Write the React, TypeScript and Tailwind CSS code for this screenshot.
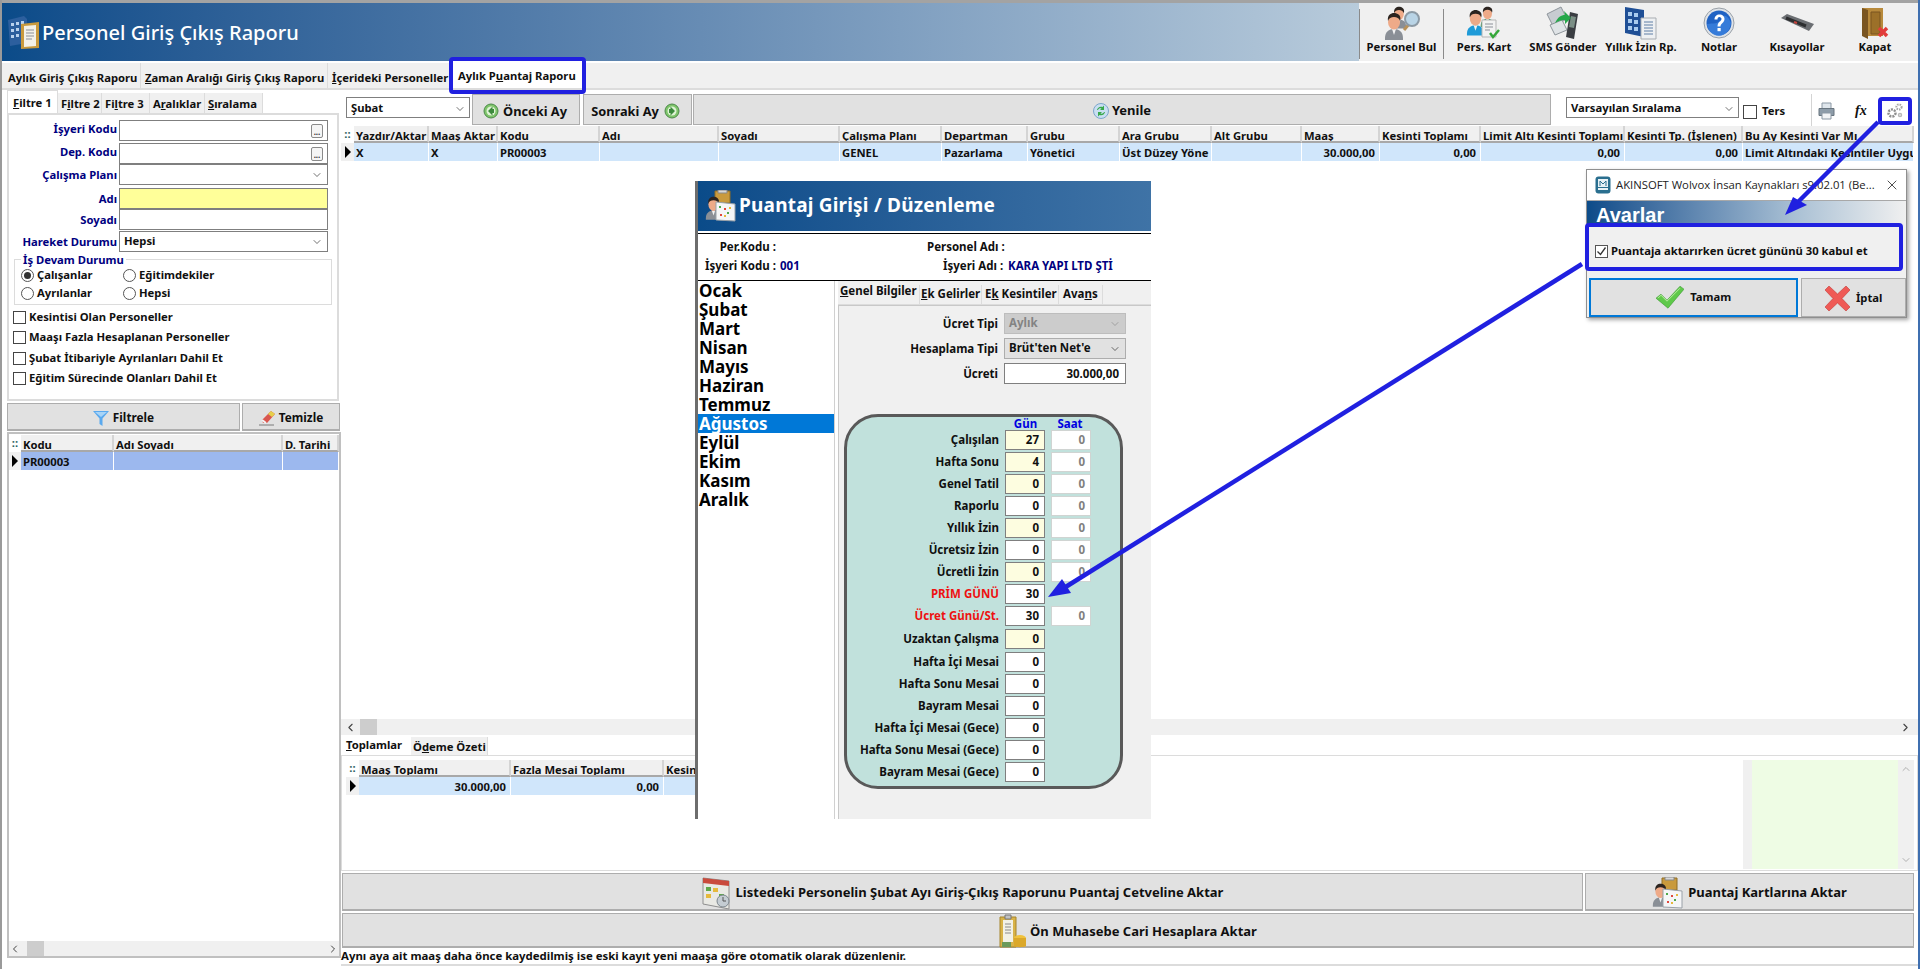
import React from "react";
import { ChevronDown, ChevronLeft, ChevronRight, ChevronUp, X } from "lucide-react";

// --- drawn icons ---
const Person = ({ x = 0, y = 0, s = 1, suit = "#8a8f96" }: { x?: number; y?: number; s?: number; suit?: string }) => (
  <g transform={`translate(${x} ${y}) scale(${s})`}>
    <path d="M1 26c0-6 4-9 9-9s9 3 9 9v2H1z" fill={suit} />
    <path d="M8 17l2 6 2-6z" fill="#f2f2f2" />
    <ellipse cx="10" cy="10" rx="6" ry="7.5" fill="#eeaa88" />
    <path d="M4 9c-1-6 3-8 6-8s8 2 6 8c-1-3-3-4-6-4S5 6 4 9z" fill="#2b2420" />
  </g>
);

const AppIcon = () => (
  <svg width="34" height="33" viewBox="0 0 34 33">
    <path d="M2 4l16-4 3 3v24L4 30z" fill="#2c5f9e" />
    <g fill="#b9d2ee">
      <rect x="5" y="7" width="3" height="3" /><rect x="10" y="6" width="3" height="3" /><rect x="15" y="5" width="3" height="3" />
      <rect x="5" y="13" width="3" height="3" /><rect x="10" y="12" width="3" height="3" /><rect x="15" y="11" width="3" height="3" />
      <rect x="5" y="19" width="3" height="3" /><rect x="10" y="18" width="3" height="3" />
    </g>
    <path d="M15 8l18-2v26l-18 1z" fill="#c99a3d" />
    <path d="M18 10l12-1v21l-12 1z" fill="#f3f1e8" />
    <path d="M20 14h8M20 17h8M20 20h8M20 23h6" stroke="#8b9099" strokeWidth="1" />
  </svg>
);

const PersonelBulIcon = () => (
  <svg width="36" height="34" viewBox="0 0 36 34">
    <Person x={7} y={0} s={0.8} />
    <Person x={0} y={6} s={1} />
    <path d="M20 24l6-7" stroke="#b9925a" strokeWidth="3" />
    <circle cx="28" cy="13" r="7" fill="#b9d4e6" stroke="#8c9aa5" strokeWidth="2" />
  </svg>
);

const PersKartIcon = () => (
  <svg width="36" height="34" viewBox="0 0 36 34">
    <Person x={14} y={0} s={0.75} suit="#2c8a4a" />
    <Person x={0} y={3} s={0.95} suit="#1f9bd8" />
    <path d="M16 14h14v17H16z" fill="#f2f2f2" stroke="#b5b5b5" />
    <path d="M19 18h8M19 21h8M19 24h5" stroke="#8b9099" />
    <path d="M24 27l3 4 6-7" stroke="#35a83a" strokeWidth="2.5" fill="none" />
  </svg>
);

const SmsIcon = () => (
  <svg width="34" height="36" viewBox="0 0 34 36">
    <path d="M1 9l14-7 6 12-14 7z" fill="#c7ccd1" stroke="#8e959b" />
    <path d="M4 20l12-5 5 10-12 5z" fill="#dfe3e6" stroke="#8e959b" />
    <path d="M24 7l8 2-4 25-8-2z" fill="#3a3d42" />
    <path d="M25 11l5 1-2 11-5-1z" fill="#7b8f86" />
    <path d="M9 18c3-6 6-8 10-8l-1-4 7 7-6 6v-4c-4 0-7 1-10 3z" fill="#25a84a" />
  </svg>
);

const YillikIcon = () => (
  <svg width="34" height="36" viewBox="0 0 34 36">
    <path d="M1 2l19 3v27L1 28z" fill="#1f4f96" />
    <g fill="#a9cbef">
      <rect x="4" y="7" width="4" height="4" /><rect x="10" y="8" width="4" height="4" />
      <rect x="4" y="14" width="4" height="4" /><rect x="10" y="15" width="4" height="4" />
      <rect x="4" y="21" width="4" height="4" /><rect x="10" y="22" width="4" height="4" />
    </g>
    <path d="M17 13h15v21H17z" fill="#eef0f2" stroke="#a8adb2" />
    <path d="M20 17h9M20 20h9M20 23h9M20 26h9M20 29h9" stroke="#5f7fa6" />
  </svg>
);

const HelpIcon = () => (
  <svg width="32" height="32" viewBox="0 0 32 32">
    <circle cx="16" cy="16" r="15" fill="#dfe3e8" stroke="#9aa1a8" />
    <circle cx="16" cy="16" r="12.5" fill="#1f62c4" />
    <path d="M4 17c6-1 12 1 16-7 2-4 7 2 8 6-1 8-7 13-12 13-6 0-11-5-12-12z" fill="#3e86e2" opacity=".7" />
    <path d="M11.5 12.5c0-3 2-5 5-5s5 2 5 4.5c0 4-4 4-4 7.500h-3c0-5 4-5 4-7.500 0-1-1-2-2-2-1.500 0-2 1-2 2.500z" fill="#fff" />
    <rect x="14.500" y="21" width="3.200" height="3.200" fill="#fff" />
  </svg>
);

const KeyboardIcon = () => (
  <svg width="34" height="20" viewBox="0 0 34 20">
    <path d="M1 5l6-4 27 10-5 7z" fill="#6b6e72" />
    <path d="M6 5l20 8" stroke="#2d2e30" strokeWidth="3" />
    <path d="M14 9l3 1" stroke="#c8443c" strokeWidth="2" />
  </svg>
);

const DoorIcon = () => (
  <svg width="28" height="34" viewBox="0 0 28 34">
    <path d="M1 2h21v28H1z" fill="#b88a3c" />
    <path d="M1 2l6 2v29l-6-3z" fill="#7a5521" />
    <path d="M10 6h9v22h-9z" fill="#9c7029" stroke="#7a5521" />
    <path d="M18 22l8 8M26 22l-8 8" stroke="#e23c3c" strokeWidth="3.500" />
  </svg>
);

const RoundArrow = ({ dir }: { dir: "left" | "right" }) => (
  <svg width="16" height="16" viewBox="0 0 16 16">
    <circle cx="8" cy="8" r="7" fill="#7ec46a" stroke="#4c8a4a" />
    <circle cx="8" cy="8" r="4.500" fill="#dff3d6" />
    <path d={dir === "left" ? "M9.500 3.500L5 8l4.500 4.500V10H11V6H9.500z" : "M6.500 3.500L11 8l-4.500 4.500V10H5V6h1.500z"} fill="#3c8a3c" />
  </svg>
);

const RefreshIcon = () => (
  <svg width="16" height="16" viewBox="0 0 16 16">
    <circle cx="8" cy="8" r="7.500" fill="#c9dff2" stroke="#7da6cb" />
    <path d="M4 7c.5-2.500 3-4 5.500-3L11 2.500V7H7l1.500-1.500C7 5 5.500 5.500 5 7z" fill="#37a84a" />
    <path d="M12 9c-.5 2.500-3 4-5.500 3L5 13.500V9h4l-1.500 1.500C9 11 10.500 10.500 11 9z" fill="#37a84a" />
  </svg>
);

const PrinterIcon = () => (
  <svg width="17" height="18" viewBox="0 0 17 18">
    <path d="M4 1h9v6H4z" fill="#dfe6ec" stroke="#8b98a4" />
    <path d="M1 6.500h15v7H1z" fill="#8d9ca9" stroke="#68757f" />
    <path d="M4 11h9v6H4z" fill="#f2f4f6" stroke="#8b98a4" />
  </svg>
);

const GearsIcon = () => (
  <svg width="18" height="18" viewBox="0 0 18 18" fill="none">
    <circle cx="6" cy="11" r="3.500" stroke="#8e8e8e" strokeWidth="2.500" strokeDasharray="2 1" />
    <circle cx="13" cy="5" r="2.600" stroke="#a5a5a5" strokeWidth="2" strokeDasharray="1.500 1" />
    <circle cx="14" cy="13" r="1.500" stroke="#b8b8b8" strokeWidth="1.500" />
  </svg>
);

const FunnelIcon = () => (
  <svg width="16" height="16" viewBox="0 0 16 16">
    <path d="M0 1h16L9.500 8.500V16L6.500 14V8.500z" fill="#5aa9ee" />
    <path d="M2 2h12L8 7z" fill="#a8d4f7" />
  </svg>
);

const EraserIcon = () => (
  <svg width="17" height="16" viewBox="0 0 17 16">
    <path d="M3 10L12 1l4 3-8 9H4z" fill="#d9574f" />
    <path d="M9 4l3-3 4 3-3 3z" fill="#e6d04c" />
    <path d="M0 15h15" stroke="#7a7a7a" />
    <path d="M3 10l4 3" stroke="#f2f2f2" strokeWidth="2" />
  </svg>
);

const CalendarIcon = () => (
  <svg width="29" height="35" viewBox="0 0 29 35">
    <path d="M1 3l26 3v28L1 29z" fill="#e9e9e4" stroke="#8f8f8f" />
    <path d="M1 3l26 3v5L1 8z" fill="#c94a3c" />
    <g fill="#5fa84a"><rect x="4" y="12" width="5" height="4" /><rect x="17" y="19" width="5" height="4" /></g>
    <g fill="#e6b93c"><rect x="11" y="13" width="5" height="4" /><rect x="4" y="19" width="5" height="4" /></g>
    <circle cx="21" cy="26" r="6" fill="#c4ccd2" stroke="#7c868e" />
    <path d="M21 22v4h3" stroke="#555" fill="none" />
  </svg>
);

const PuantajIcon = ({ w = 31, h = 32 }: { w?: number; h?: number }) => (
  <svg width={w} height={h} viewBox="0 0 31 32">
    <path d="M10 1h15v12H10z" fill="#c99a3d" stroke="#8f6c25" />
    <path d="M13 0h9v3h-9z" fill="#d8d8d8" stroke="#888" />
    <Person x={0} y={6} s={0.85} />
    <path d="M11 12l19 2v17l-19-1z" fill="#f5f6f7" stroke="#9aa1a8" />
    <g fill="#4ea84a"><rect x="14" y="16" width="2" height="2" /><rect x="22" y="22" width="2" height="2" /></g>
    <g fill="#e0483c"><rect x="19" y="18" width="2" height="2" /><rect x="15" y="24" width="2" height="2" /></g>
    <g fill="#e6b93c"><rect x="24" y="17" width="2" height="2" /><rect x="19" y="25" width="2" height="2" /></g>
  </svg>
);

const LedgerIcon = () => (
  <svg width="28" height="35" viewBox="0 0 28 35">
    <path d="M1 3h16v30H1z" fill="#d9b348" stroke="#a5842c" />
    <path d="M4 6h10v22H4z" fill="#f2f1e6" />
    <path d="M6 10h6M6 13h6M6 16h6M6 19h6" stroke="#8a8a8a" />
    <path d="M6 1h6v4H6z" fill="#c2c2c2" stroke="#777" />
    <path d="M3 28h9v5H3z" fill="#6b9a5a" />
    <ellipse cx="21" cy="24" rx="6" ry="3" fill="#f0c23c" />
    <path d="M15 24v8c0 1.500 12 1.500 12 0v-8" fill="#dba82a" />
  </svg>
);

const CheckIcon = ({ w = 28 }: { w?: number }) => (
  <svg width={w} height={w * 0.8} viewBox="0 0 28 22">
    <path d="M0 12l5-4 6 6L24 0l4 3-16 19z" fill="#5fc94a" stroke="#3e9a34" strokeWidth=".6" />
    <path d="M2 12l3-3 6 6L24 2" stroke="#b8ee9e" strokeWidth="1" fill="none" />
  </svg>
);

const CrossIcon = () => (
  <svg width="25" height="25" viewBox="0 0 25 25">
    <path d="M0 4l4-4 8.500 8L21 0l4 4-8 8.500 8 8.500-4 4-8.500-8L4 25l-4-4 8-8.500z" fill="#ef5a56" stroke="#c33a38" strokeWidth=".6" />
  </svg>
);

const WolvoxIcon = () => (
  <svg width="16" height="18" viewBox="0 0 16 18" className="shrink-0">
    <rect x=".5" y=".5" width="15" height="17" rx="3" fill="#2a6f8f" />
    <rect x="3" y="3" width="10" height="8" fill="#e8f2f6" />
    <path d="M5 10V5l3 3 3-3v5" stroke="#2a6f8f" fill="none" />
    <path d="M3 13h10" stroke="#e8f2f6" strokeWidth="2" />
  </svg>
);

// --- small controls ---
const Tab = ({ active, className = "", children }: { active?: boolean; className?: string; children: React.ReactNode }) => (
  <div className={`flex shrink-0 items-center border-r border-[#dcdcdc] pt-[3px] pl-[3px] whitespace-nowrap ${active ? "-mt-[3px] h-[23px] border-t border-l bg-white" : "h-[20px] bg-[#f0f0f0]"} ${className}`}>
    {children}
  </div>
);

const HeaderCell = ({ w, children }: { w: number; children?: React.ReactNode }) => (
  <div style={{ width: w }} className="h-full shrink-0 overflow-hidden border-r-2 border-b-2 border-r-[#d4d4d4] border-b-[#a8a8a8] bg-[#f0f0f0] pl-[2px] leading-[19px] whitespace-nowrap">
    {children}
  </div>
);

const Cell = ({ w, right, bg, children }: { w: number; right?: boolean; bg: string; children?: React.ReactNode }) => (
  <div style={{ width: w, backgroundColor: bg }} className={`h-full shrink-0 overflow-hidden border-r border-r-white pl-[2px] leading-[20px] whitespace-nowrap ${right ? "pr-[4px] text-right" : "pr-[2px]"}`}>
    {children}
  </div>
);

const Indicator = () => <div className="h-0 w-0 border-y-[6px] border-l-[6px] border-y-transparent border-l-black" />;

const Grip = () => <div className="flex h-full w-full items-center justify-center pb-[2px] leading-none text-[#2c5f5f]">::</div>;

const Field = ({ label, top, bg = "bg-white", lift = "pt-[1px]", children }: { label: string; top: number; bg?: string; lift?: string; children?: React.ReactNode }) => (
  <div style={{ marginTop: top }} className="flex h-[21px] items-center">
    <div className={`w-[110px] pr-[2px] text-right whitespace-nowrap text-[#000080] ${lift}`}>{label}</div>
    <div className={`flex h-full w-[209px] items-center justify-between border border-[#7f7f7f] px-[4px] ${bg}`}>{children}</div>
  </div>
);

const DotsBtn = () => (
  <div className="flex h-[14px] w-[12px] items-end justify-center rounded-[2px] border border-[#8a8a8a] bg-[#f5f5f5] text-[8px] leading-[10px] text-[#333]">...</div>
);

const Radio = ({ on, label, w }: { on?: boolean; label: string; w: string }) => (
  <div className={`flex items-center gap-[3px] ${w}`}>
    <div className="flex h-[13px] w-[13px] items-center justify-center rounded-full border border-[#555] bg-white">
      {on && <div className="h-[7px] w-[7px] rounded-full bg-[#333]" />}
    </div>
    {label}
  </div>
);

const Box = ({ label, top = 7 }: { label: string; top?: number }) => (
  <div style={{ marginTop: top }} className="flex h-[13px] items-center gap-[3px]">
    <div className="h-[13px] w-[13px] shrink-0 border border-[#444] bg-white" />
    {label}
  </div>
);

const ToolItem = ({ label, w, icon }: { label: string; w: number; icon: React.ReactNode }) => (
  <div style={{ width: w }} className="flex shrink-0 flex-col items-center">
    <div className="flex h-[34px] items-center justify-center">{icon}</div>
    <div className="leading-[14px] whitespace-nowrap">{label}</div>
  </div>
);

const BigButton = ({ className = "", children }: { className?: string; children: React.ReactNode }) => (
  <div className={`flex items-center justify-center border border-[#adadad] bg-[#e1e1e1] pt-[2px] ${className}`}>{children}</div>
);

// --- data ---
const mainCols: [string, number, string, boolean?][] = [
  ["Yazdır/Aktar", 75, "X"],
  ["Maaş Aktar", 69, "X"],
  ["Kodu", 102, "PR00003"],
  ["Adı", 119, ""],
  ["Soyadı", 121, ""],
  ["Çalışma Planı", 102, "GENEL"],
  ["Departman", 86, "Pazarlama"],
  ["Grubu", 92, "Yönetici"],
  ["Ara Grubu", 92, "Üst Düzey Yöne"],
  ["Alt Grubu", 90, ""],
  ["Maaş", 78, "30.000,00", true],
  ["Kesinti Toplamı", 101, "0,00", true],
  ["Limit Altı Kesinti Toplamı", 144, "0,00", true],
  ["Kesinti Tp. (İşlenen)", 118, "0,00", true],
  ["Bu Ay Kesinti Var Mı", 171, "Limit Altındaki Kesintiler Uygu"],
];

const months = ["Ocak", "Şubat", "Mart", "Nisan", "Mayıs", "Haziran", "Temmuz", "Ağustos", "Eylül", "Ekim", "Kasım", "Aralık"];

const dayRows: { label: string; v: string; saat?: string; yellow?: boolean; red?: boolean; mt?: string }[] = [
  { label: "Çalışılan", v: "27", saat: "0", yellow: true },
  { label: "Hafta Sonu", v: "4", saat: "0", yellow: true },
  { label: "Genel Tatil", v: "0", saat: "0", yellow: true },
  { label: "Raporlu", v: "0", saat: "0" },
  { label: "Yıllık İzin", v: "0", saat: "0", yellow: true },
  { label: "Ücretsiz İzin", v: "0", saat: "0" },
  { label: "Ücretli İzin", v: "0", saat: "0", yellow: true },
  { label: "PRİM GÜNÜ", v: "30", red: true },
  { label: "Ücret Günü/St.", v: "30", saat: "0", red: true },
  { label: "Uzaktan Çalışma", v: "0", yellow: true, mt: "mt-[1px]" },
  { label: "Hafta İçi Mesai", v: "0", mt: "mt-[1px]" },
  { label: "Hafta Sonu Mesai", v: "0" },
  { label: "Bayram Mesai", v: "0" },
  { label: "Hafta İçi Mesai (Gece)", v: "0" },
  { label: "Hafta Sonu Mesai (Gece)", v: "0" },
  { label: "Bayram Mesai (Gece)", v: "0" },
];

export default function App() {
  return (
    <div className="relative flex h-[969px] w-[1920px] flex-col overflow-hidden border-r-2 border-l-2 border-r-[#3f6fb0] border-l-[#9a9a9a] bg-white font-['Noto_Sans','DejaVu_Sans',sans-serif] text-[11.25px] leading-tight font-bold text-[#101010]">
      <div className="h-[3px] shrink-0 bg-[#a3a3a3]" />

      {/* title band and toolbar */}
      <div className="flex h-[58px] shrink-0">
        <div className="flex w-[1357px] items-center gap-[2px] bg-linear-to-r from-[#0a4b89] to-[#b8cbdb] pl-[4px]">
          <AppIcon />
          <span className="text-[20px] font-medium text-white">Personel Giriş Çıkış Raporu</span>
        </div>
        <div className="flex flex-1 items-start bg-[#f0f0f0] pt-[3px]">
          <div className="mt-[3px] h-[50px] border-l border-[#8a8a8a]" />
          <ToolItem label="Personel Bul" w={83} icon={<PersonelBulIcon />} />
          <div className="mt-[3px] h-[50px] border-l border-[#8a8a8a]" />
          <ToolItem label="Pers. Kart" w={80} icon={<PersKartIcon />} />
          <ToolItem label="SMS Gönder" w={78} icon={<SmsIcon />} />
          <ToolItem label="Yıllık İzin Rp." w={78} icon={<YillikIcon />} />
          <ToolItem label="Notlar" w={78} icon={<HelpIcon />} />
          <ToolItem label="Kısayollar" w={78} icon={<KeyboardIcon />} />
          <ToolItem label="Kapat" w={78} icon={<DoorIcon />} />
        </div>
      </div>
      <div className="h-[2px] shrink-0 bg-white" />

      {/* report tabs */}
      <div className="flex h-[27px] shrink-0 items-center border-b-2 border-[#dcdcdc] bg-[#f0f0f0] pl-[1px]">
        <div className="flex h-full w-[138px] items-center border-r border-[#dcdcdc] pt-[5px] pl-[5px] whitespace-nowrap">Aylık Giriş Çıkış Raporu</div>
        <div className="flex h-full w-[187px] items-center border-r border-[#dcdcdc] pt-[5px] pl-[4px] whitespace-nowrap"><span><u>Z</u>aman Aralığı Giriş Çıkış Raporu</span></div>
        <div className="flex h-full w-[122px] items-center overflow-hidden pt-[5px] pl-[4px] whitespace-nowrap"><span><u>İ</u>çerideki Personeller</span></div>
        <div className="-mt-[4px] flex h-[28px] w-[136px] items-center bg-white pt-[6px] pl-[8px] whitespace-nowrap"><span>Aylık P<u>u</u>antaj Raporu</span></div>
      </div>

      <div className="flex min-h-0 flex-1">
        {/* left column */}
        <div className="flex w-[339px] shrink-0 flex-col pt-[3px] pl-[5px]">
          <div className="flex h-[20px] items-end">
            <Tab active className="w-[51px]"><span className="pl-[2px]"><u>F</u>iltre 1</span></Tab>
            <Tab className="w-[44px]"><span>F<u>i</u>ltre 2</span></Tab>
            <Tab className="w-[48px]"><span>Fi<u>l</u>tre 3</span></Tab>
            <Tab className="w-[55px]"><span>A<u>r</u>alıklar</span></Tab>
            <Tab className="w-[58px]"><span><u>S</u>ıralama</span></Tab>
          </div>
          <div className="h-[288px] w-[332px] border-2 border-[#dcdcdc]">
            <Field label="İşyeri Kodu" top={5} lift="pb-[2px]"><span /><DotsBtn /></Field>
            <Field label="Dep. Kodu" top={2} lift="pb-[3px]"><span /><DotsBtn /></Field>
            <Field label="Çalışma Planı" top={0}><span /><ChevronDown size={12} strokeWidth={1.2} /></Field>
            <Field label="Adı" top={3} bg="bg-[#ffff99]" />
            <Field label="Soyadı" top={0} />
            <Field label="Hareket Durumu" top={1}><span>Hepsi</span><ChevronDown size={12} strokeWidth={1.2} /></Field>
            <fieldset className="mt-[1px] ml-[5px] h-[52px] w-[318px] border border-[#dcdcdc] px-[6px]">
              <legend className="px-[2px] leading-[13px] text-[#000080]">İş Devam Durumu</legend>
              <div className="flex h-[18px] items-center"><Radio on label="Çalışanlar" w="w-[102px]" /><Radio label="Eğitimdekiler" w="" /></div>
              <div className="flex h-[18px] items-center"><Radio label="Ayrılanlar" w="w-[102px]" /><Radio label="Hepsi" w="" /></div>
            </fieldset>
            <div className="pl-[4px]">
              <Box label="Kesintisi Olan Personeller" top={6} />
              <Box label="Maaşı Fazla Hesaplanan Personeller" />
              <Box label="Şubat İtibariyle Ayrılanları Dahil Et" top={8} />
              <Box label="Eğitim Sürecinde Olanları Dahil Et" />
            </div>
          </div>
          <div className="mt-[2px] flex h-[28px] gap-[2px] text-[11.8px]">
            <BigButton className="w-[233px] gap-[4px] border-b-2"><FunnelIcon />Filtrele</BigButton>
            <BigButton className="w-[98px] gap-[3px] border-b-2"><EraserIcon />Temizle</BigButton>
          </div>
          <div className="mt-[1px] flex h-[526px] w-[334px] flex-col border-2 border-[#c0c0c0]">
            <div className="mt-[1px] flex h-[17px] w-full">
              <div className="w-[12px] shrink-0"><Grip /></div>
              <HeaderCell w={93}>Kodu</HeaderCell>
              <HeaderCell w={169}>Adı Soyadı</HeaderCell>
              <HeaderCell w={56}>D. Tarihi</HeaderCell>
            </div>
            <div className="flex h-[18px] w-full">
              <div className="flex w-[12px] shrink-0 items-center justify-center bg-[#f0f0f0]"><Indicator /></div>
              <Cell w={93} bg="#9cb8ee">PR00003</Cell>
              <Cell w={169} bg="#9cb8ee" />
              <Cell w={56} bg="#9cb8ee" />
            </div>
            <div className="mt-auto flex h-[15px] w-full items-center bg-[#f0f0f0] text-[#444]">
              <ChevronLeft size={12} strokeWidth={2} />
              <div className="ml-[6px] h-full w-[17px] bg-[#cdcdcd]" />
              <ChevronRight size={12} strokeWidth={2} className="ml-auto" />
            </div>
          </div>
        </div>

        {/* right column */}
        <div className="flex min-w-0 flex-1 flex-col">
          <div className="flex h-[36px] shrink-0 items-end pb-[1px] pl-[5px]">
            <div className="mb-[7px] flex h-[21px] w-[124px] items-center justify-between border border-[#7f7f7f] pt-[2px] pr-[3px] pl-[4px]">Şubat<ChevronDown size={12} strokeWidth={1.2} /></div>
            <BigButton className="ml-[2px] h-[31px] w-[108px] gap-[4px] pr-[2px] text-[12.8px]"><RoundArrow dir="left" />Önceki Ay</BigButton>
            <BigButton className="ml-[3px] h-[31px] w-[109px] gap-[5px] pr-[4px] text-[12.8px]">Sonraki Ay<RoundArrow dir="right" /></BigButton>
            <BigButton className="ml-[1px] h-[31px] w-[858px] gap-[3px] text-[13px]"><RefreshIcon />Yenile</BigButton>
            <div className="mb-[7px] ml-[15px] flex h-[21px] w-[173px] items-center justify-between border border-[#7f7f7f] pt-[2px] pr-[3px] pl-[4px]">Varsayılan Sıralama<ChevronDown size={12} strokeWidth={1.2} /></div>
            <div className="mb-[7px] ml-[4px] flex h-[13px] items-center gap-[5px]"><div className="h-[14px] w-[14px] border border-[#444]" />Ters</div>
            <div className="mb-[-1px] ml-[26px] flex h-[32px] items-center border-l border-[#d4d4d4] pt-[2px]">
              <div className="ml-[6px]"><PrinterIcon /></div>
              <span className="ml-[20px] font-['Liberation_Serif',serif] text-[14px] italic">fx</span>
              <div className="ml-[19px]"><GearsIcon /></div>
            </div>
          </div>

          <div className="flex h-[17px] shrink-0">
            <div className="w-[13px] shrink-0"><Grip /></div>
            {mainCols.map(([h, w]) => <HeaderCell key={h} w={w}>{h}</HeaderCell>)}
          </div>
          <div className="flex h-[18px] shrink-0">
            <div className="flex w-[13px] shrink-0 items-center justify-center bg-[#f0f0f0]"><Indicator /></div>
            {mainCols.map(([h, w, v, r]) => <Cell key={h} w={w} right={r} bg="#d0e6fb">{v}</Cell>)}
          </div>

          <div className="mt-[558px] flex h-[16px] shrink-0 items-center bg-[#f0f0f0] pr-[6px] pl-[3px] text-[#444]">
            <ChevronLeft size={13} strokeWidth={2} />
            <div className="ml-[3px] h-full w-[17px] bg-[#cdcdcd]" />
            <ChevronRight size={13} strokeWidth={2} className="ml-auto" />
          </div>

          <div className="flex h-[20px] shrink-0 items-end whitespace-nowrap">
            <div className="flex h-[20px] w-[70px] items-center pl-[5px]"><span><u>T</u>oplamlar</span></div>
            <div className="flex h-[18px] w-[77px] items-center border-r border-[#dcdcdc] bg-[#f0f0f0] pt-[2px] pl-[2px]"><span>Ö<u>d</u>eme Özeti</span></div>
          </div>
          <div className="flex h-[116px] shrink-0 border border-[#dcdcdc] pt-[4px]">
            <div className="flex min-w-0 flex-1 flex-col pl-[4px]">
              <div className="flex h-[17px]">
                <div className="w-[13px] shrink-0"><Grip /></div>
                <HeaderCell w={152}>Maaş Toplamı</HeaderCell>
                <HeaderCell w={153}>Fazla Mesai Toplamı</HeaderCell>
                <HeaderCell w={120}>Kesinti</HeaderCell>
              </div>
              <div className="flex h-[18px]">
                <div className="flex w-[13px] shrink-0 items-center justify-center bg-[#f0f0f0]"><Indicator /></div>
                <Cell w={152} right bg="#d0e6fb">30.000,00</Cell>
                <Cell w={153} right bg="#d0e6fb">0,00</Cell>
                <Cell w={120} bg="#d0e6fb" />
              </div>
            </div>
            <div className="mb-[1px] w-[9px] bg-[#f0f0f0]" />
            <div className="mb-[1px] w-[146px] bg-[#eefce4]" />
            <div className="mr-[3px] mb-[1px] flex w-[16px] flex-col items-center justify-between bg-[#f0f0f0] py-[3px] text-[#b0b0b0]">
              <ChevronUp size={12} /><ChevronDown size={12} />
            </div>
          </div>

          <div className="mt-[2px] flex h-[38px] shrink-0 gap-[2px] pl-[1px] text-[13px]">
            <BigButton className="w-[1241px] gap-[5px] border-b-2"><CalendarIcon />Listedeki Personelin Şubat Ayı Giriş-Çıkış Raporunu Puantaj Cetveline Aktar</BigButton>
            <BigButton className="w-[329px] gap-[5px] border-b-2"><PuantajIcon />Puantaj Kartlarına Aktar</BigButton>
          </div>
          <BigButton className="mt-[2px] ml-[1px] h-[35px] w-[1572px] shrink-0 gap-[3px] border-b-2 text-[13px]"><LedgerIcon />Ön Muhasebe Cari Hesaplara Aktar</BigButton>
          <div className="flex h-[18px] shrink-0 items-center border-b-2 border-[#dcdcdc] text-[11.4px]">Aynı aya ait maaş daha önce kaydedilmiş ise eski kayıt yeni maaşa göre otomatik olarak düzenlenir.</div>
        </div>
      </div>

      {/* pasted Puantaj window */}
      <div className="absolute top-[181px] left-[693px] flex h-[638px] w-[456px] flex-col border-l-[3px] border-[#6d6d6d] bg-white text-[11.5px]">
        <div className="flex h-[50px] shrink-0 items-center gap-[3px] bg-linear-to-r from-[#0a4b89] to-[#3f73a6] pl-[7px]">
          <PuantajIcon />
          <span className="text-[19px] font-bold tracking-[0.2px] text-white">Puantaj Girişi / Düzenleme</span>
        </div>
        <div className="mt-[2px] flex h-[48px] shrink-0 flex-col justify-center gap-[5px] border-y border-black pb-[1px]">
          <div className="flex">
            <div className="w-[78px] text-right whitespace-nowrap">Per.Kodu :</div>
            <div className="w-[151px]" />
            <div className="w-[73px] text-right whitespace-nowrap">Personel Adı :</div>
          </div>
          <div className="flex">
            <div className="w-[78px] text-right whitespace-nowrap">İşyeri Kodu :</div>
            <div className="ml-[4px] w-[163px] text-[#000080]">001</div>
            <div className="w-[60px] text-right whitespace-nowrap">İşyeri Adı :</div>
            <div className="ml-[5px] whitespace-nowrap text-[#000080]">KARA YAPI LTD ŞTİ</div>
          </div>
        </div>
        <div className="flex min-h-0 flex-1">
          <div className="w-[137px] shrink-0 border-r border-[#d0d0d0] text-[17px] leading-[19px] font-bold text-black">
            {months.map((m) => (
              <div key={m} className={`h-[19px] pl-[1px] ${m === "Ağustos" ? "bg-[#0078d7] text-white" : ""}`}>{m}</div>
            ))}
          </div>
          <div className="ml-[3px] flex min-w-0 flex-1 flex-col bg-[#f0f0f0]">
            <div className="flex h-[24px] shrink-0 items-end border-b border-[#dcdcdc] bg-[#f0f0f0]">
              <div className="flex h-[22px] w-[81px] items-center bg-[#f0f0f0] pb-[4px] pl-[2px] whitespace-nowrap"><span><u>G</u>enel Bilgiler</span></div>
              <div className="flex h-[19px] w-[63px] items-center border-x border-[#dcdcdc] pl-[1px] whitespace-nowrap"><span><u>E</u>k Gelirler</span></div>
              <div className="flex h-[19px] w-[77px] items-center border-r border-[#dcdcdc] pl-[3px] whitespace-nowrap"><span>E<u>k</u> Kesintiler</span></div>
              <div className="flex h-[19px] w-[44px] items-center border-r border-[#dcdcdc] pl-[4px] whitespace-nowrap"><span>Ava<u>n</u>s</span></div>
            </div>
            <div className="flex min-h-0 flex-1 flex-col border-t border-l border-[#c8c8c8] pt-[7px]">
              <div className="flex h-[21px] items-center">
                <div className="w-[165px] pt-[1px] pr-[6px] text-right">Ücret Tipi</div>
                <div className="flex h-full w-[122px] items-center justify-between border border-[#bdbdbd] bg-[#cccccc] px-[4px] text-[#838383]">Aylık<ChevronDown size={12} strokeWidth={1.2} /></div>
              </div>
              <div className="mt-[4px] flex h-[21px] items-center">
                <div className="w-[165px] pt-[1px] pr-[6px] text-right">Hesaplama Tipi</div>
                <div className="flex h-full w-[122px] items-center justify-between border border-[#adadad] bg-[#e1e1e1] px-[4px]">Brüt'ten Net'e<ChevronDown size={12} strokeWidth={1.2} /></div>
              </div>
              <div className="mt-[4px] flex h-[21px] items-center">
                <div className="w-[165px] pt-[1px] pr-[6px] text-right">Ücreti</div>
                <div className="h-full w-[122px] border border-[#7f7f7f] bg-white pr-[6px] text-right leading-[19px]">30.000,00</div>
              </div>
              <div className="mt-[30px] ml-[5px] h-[375px] w-[279px] rounded-[34px] border-[3px] border-[#595959] bg-[#c1e1dc]">
                <div className="flex h-[13px] pl-[151px] leading-[14px] text-[#0000e0]">
                  <div className="w-[52px] pr-[6px] pl-[9px] text-center">Gün</div>
                  <div className="w-[40px] text-center">Saat</div>
                </div>
                <div className="flex flex-col gap-[2px]">
                  {dayRows.map((r) => (
                    <div key={r.label} className={`flex h-[20px] items-center ${r.mt ?? ""}`}>
                      <div className={`w-[155px] pt-[1px] pr-[3px] text-right whitespace-nowrap ${r.red ? "text-[#ee1111]" : ""}`}>{r.label}</div>
                      <div className={`ml-[3px] h-full w-[40px] border border-[#7f7f7f] pr-[5px] text-right leading-[17px] ${r.yellow ? "bg-[#fdfde0]" : "bg-white"}`}>{r.v}</div>
                      {r.saat && <div className="ml-[6px] h-full w-[40px] border border-[#d0d4d2] bg-white pr-[5px] text-right leading-[17px] text-[#808080]">{r.saat}</div>}
                    </div>
                  ))}
                </div>
              </div>
            </div>
          </div>
        </div>
      </div>

      {/* settings dialog */}
      <div className="absolute top-[169px] left-[1584px] flex h-[149px] w-[321px] flex-col border border-[#8f8f8f] bg-[#f0f0f0] shadow-[2px_2px_4px_rgba(0,0,0,0.35)]">
        <div className="flex h-[31px] shrink-0 items-center gap-[5px] overflow-hidden border-b border-[#a8a8a8] bg-white pl-[8px] font-['Open_Sans',sans-serif] text-[11.3px] font-normal text-[#222]">
          <WolvoxIcon />
          <span className="whitespace-nowrap">AKINSOFT Wolvox İnsan Kaynakları s9.02.01 (Be...</span>
          <X size={16} strokeWidth={1.2} className="mr-[6px] ml-auto shrink-0" />
        </div>
        <div className="flex h-[25px] shrink-0 items-start overflow-hidden bg-linear-to-r from-[#0a4b89] via-[#a9c0d4] via-65% to-[#f0f0f0] pt-[2px] pl-[9px]">
          <span className="font-['Liberation_Sans',sans-serif] text-[20px] font-bold text-white">Avarlar</span>
        </div>
        <div className="flex h-[47px] shrink-0 items-center gap-[3px] pt-[3px] pl-[8px]">
          <div className="flex h-[13px] w-[13px] items-center justify-center border border-[#555] bg-white">
            <svg width="11" height="11" viewBox="0 0 11 11"><path d="M1.500 5.500l3 3 5-7" stroke="#333" strokeWidth="1.300" fill="none" /></svg>
          </div>
          Puantaja aktarırken ücret gününü 30 kabul et
        </div>
        <div className="mt-[5px] flex h-[39px] shrink-0 gap-[3px] pl-[2px]">
          <div className="flex w-[210px] items-center justify-center gap-[6px] border-2 border-[#0078d7] bg-[#e1e1e1]"><CheckIcon />Tamam</div>
          <BigButton className="w-[105px] gap-[6px]"><CrossIcon />İptal</BigButton>
        </div>
      </div>

      {/* highlight boxes and arrows */}
      <div className="absolute top-[57px] left-[447px] h-[37px] w-[137px] rounded-[4px] border-[4px] border-[#2020e0]" />
      <div className="absolute top-[97px] left-[1876px] h-[28px] w-[34px] rounded-[4px] border-[4px] border-[#2020e0]" />
      <div className="absolute top-[223px] left-[1583px] h-[48px] w-[318px] rounded-[4px] border-[4px] border-[#2020e0]" />
      <svg className="pointer-events-none absolute top-0 -left-[2px]" width="1920" height="969" viewBox="0 0 1920 969" fill="#2020e0">
        <path d="M1878 122L1796 204" stroke="#2020e0" strokeWidth="4.500" />
        <path d="M1785 215L1793 197L1807 205z" />
        <path d="M1582 264L1064 588" stroke="#2020e0" strokeWidth="4.500" />
        <path d="M1048 597L1062 579L1071 593z" />
      </svg>
    </div>
  );
}
